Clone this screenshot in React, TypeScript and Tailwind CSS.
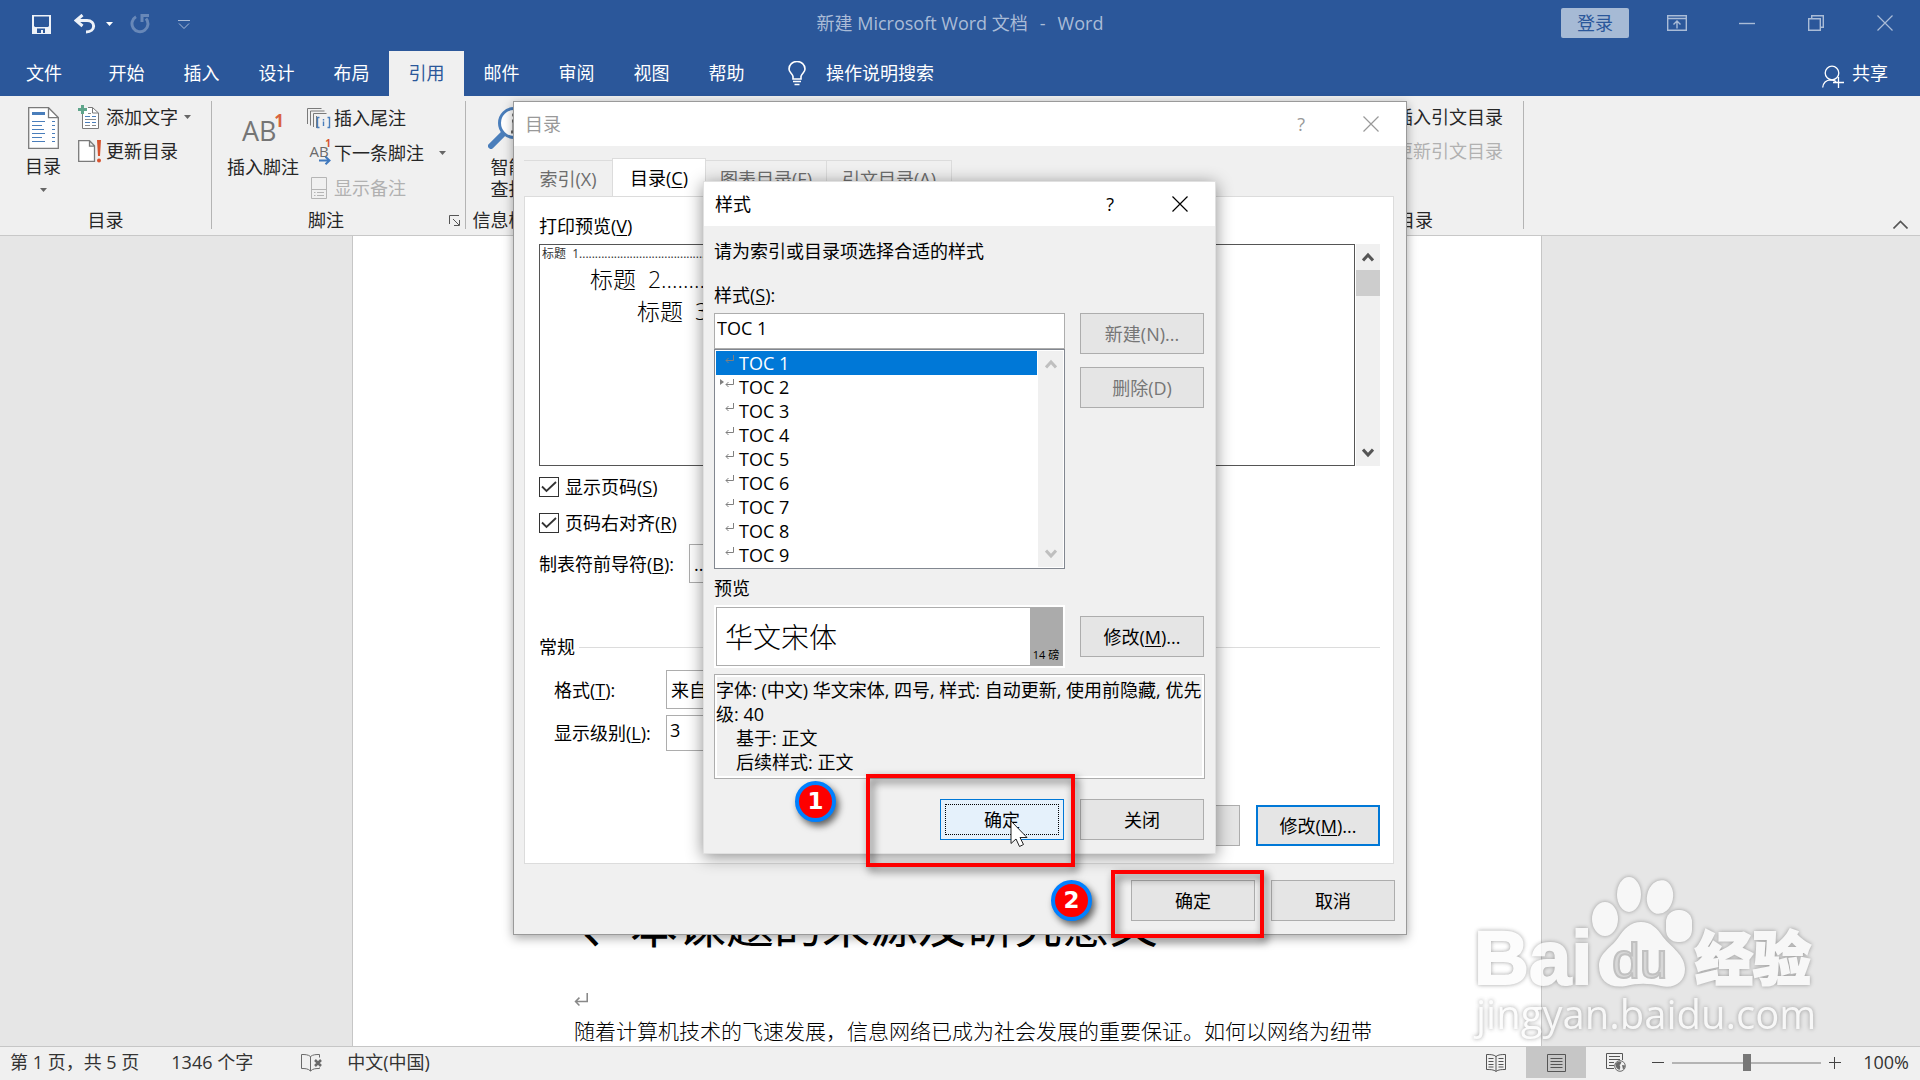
import { useState, type ReactNode } from "react";

const TABS = ["开始", "插入", "设计", "布局", "引用", "邮件", "审阅", "视图", "帮助"];
const STYLES = ["TOC 1", "TOC 2", "TOC 3", "TOC 4", "TOC 5", "TOC 6", "TOC 7", "TOC 8", "TOC 9"];

function Caret() {
  return (
    <svg width="7" height="4" viewBox="0 0 7 4" fill="currentColor" className="shrink-0">
      <path d="M0 0h7L3.5 4z" />
    </svg>
  );
}

function Chevron({ up, className }: { up?: boolean; className?: string }) {
  return (
    <svg width="12" height="10" viewBox="0 0 12 10" fill="none" stroke="currentColor" strokeWidth="3" className={className}>
      <path d={up ? "M1 8.5 6 3l5 5.5" : "M1 1.5 6 7l5-5.5"} />
    </svg>
  );
}

function CloseIcon({ size = 16 }: { size?: number }) {
  return (
    <svg width={size} height={size} viewBox="0 0 16 16" fill="none" stroke="currentColor" strokeWidth="1.2">
      <path d="M.5.5l15 15M15.5.5l-15 15" />
    </svg>
  );
}

// label text followed by its underlined access key, e.g. 目录(C)
function Key({ text, k, end = "", plain }: { text: string; k: string; end?: string; plain?: boolean }) {
  return (
    <span>
      {text}({plain ? k : <u className="underline-offset-2">{k}</u>}){end}
    </span>
  );
}

function ReturnMark({ className, size = 9 }: { className?: string; size?: number }) {
  return (
    <svg width={size} height={size} viewBox="0 0 9 9" fill="none" stroke="currentColor" className={className}>
      <path d="M8.5 0v5.5H1M3.5 3 1 5.5 3.5 8" />
    </svg>
  );
}

function PushButton({ children, disabled, primary }: { children: ReactNode; disabled?: boolean; primary?: boolean }) {
  return (
    <button
      disabled={disabled}
      className={
        "flex h-[41px] w-[124px] shrink-0 items-center justify-center bg-[#e5e5e5] " +
        (primary ? "border-2 border-[#0078d7] " : "border border-[#adadad] ") +
        (disabled ? "text-[#767676]" : "text-black")
      }
    >
      {children}
    </button>
  );
}

function TitleBar() {
  return (
    <div className="relative flex h-[51px] shrink-0 items-start text-white">
      <div className="flex h-12 items-center pl-8">
        <button aria-label="保存">
          <svg width="19" height="19" viewBox="0 0 19 19" fill="#eef2f8" fillRule="evenodd">
            <path d="M0 0h19v19H0zM2 1.5v9.5l1 1h13l1-1V1.500zM5 13.500v4.500h4v-3h2v3h2v-4.500z" />
          </svg>
        </button>
        <button aria-label="撤消" className="ml-[23px]">
          <svg width="22" height="20" viewBox="0 0 22 20" fill="none" stroke="#eef2f8" strokeWidth="3">
            <path d="M8.500 1 2 6.500 8.500 12M2.500 6.500H13c9 0 9 11.500-1 11.500" />
          </svg>
        </button>
        <button aria-label="撤消选项" className="ml-2.5"><Caret /></button>
        <button aria-label="重做" className="ml-[17px] text-[#6888b8]">
          <svg width="20" height="20" viewBox="0 0 20 20" fill="none" stroke="currentColor" strokeWidth="3">
            <path d="M6 2.800A8 8 0 1 0 16 4.500M12 8V1.500h7" />
          </svg>
        </button>
        <button aria-label="自定义快速访问工具栏" className="ml-7 text-[#aabcd7]">
          <svg width="12" height="9" viewBox="0 0 12 9" fill="none" stroke="currentColor">
            <path d="M0 .5h12M1 3.500l5 5 5-5" />
          </svg>
        </button>
      </div>
      <div className="absolute inset-x-0 top-[9px] flex justify-center gap-3 text-[18px] leading-7 text-[#aabcd7]">
        <span>新建 Microsoft Word 文档</span>
        <span>-</span>
        <span>Word</span>
      </div>
      <div className="relative ml-auto flex h-[46px] items-center pr-[27px] text-[#aabcd7]">
        <button className="h-[30px] w-[68px] rounded-xs bg-[#a6bad5] text-[18px] leading-7 text-[#2b579a]">登录</button>
        <button aria-label="功能区显示选项" className="ml-[38px]">
          <svg width="20" height="16" viewBox="0 0 20 16" fill="none" stroke="currentColor" strokeWidth="1.400">
            <path d="M.7.7h18.600v14.600H.7zM1 3.500h18M10 13.500V6.500M6.500 9.500 10 6l3.500 3.500" />
          </svg>
        </button>
        <button aria-label="最小化" className="ml-[52px]">
          <svg width="16" height="16" viewBox="0 0 16 16" fill="none" stroke="currentColor" strokeWidth="1.400"><path d="M0 8.500h16" /></svg>
        </button>
        <button aria-label="向下还原" className="ml-[53px]">
          <svg width="16" height="16" viewBox="0 0 16 16" fill="none" stroke="currentColor" strokeWidth="1.400">
            <path d="M.7 3.700h11.600v11.600H.7zM3.700 3.500V.7h11.600v11.600h-2.800" />
          </svg>
        </button>
        <button aria-label="关闭" className="ml-[53px]"><CloseIcon /></button>
      </div>
    </div>
  );
}

function TabBar({ active, onSelect }: { active: string; onSelect: (t: string) => void }) {
  return (
    <div className="flex h-[45px] shrink-0 items-stretch text-[18px] text-white">
      <button className="mr-px w-[88px]">文件</button>
      {TABS.map((t) => (
        <button
          key={t}
          onClick={() => onSelect(t)}
          className={t === active ? "w-[75px] bg-[#f0f0f0] text-[#2b579a]" : "w-[75px]"}
        >
          {t}
        </button>
      ))}
      <button className="ml-6 flex items-center gap-5">
        <svg width="18" height="25" viewBox="0 0 18 25" fill="none" stroke="currentColor" strokeWidth="1.600">
          <path d="M5 18v-2.500C4.500 12.500 1 11.500 1 8a8 7.500 0 0 1 16 0c0 3.500-3.500 4.500-4 7.500V18zM5 20.500h8M6.500 23.500h5" />
        </svg>
        操作说明搜索
      </button>
      <button className="mr-8 ml-auto flex items-center gap-2">
        <svg width="22" height="24" viewBox="0 0 22 24" fill="none" stroke="currentColor" strokeWidth="1.300" className="mt-1.5">
          <circle cx="10" cy="8" r="6.800" />
          <path d="M.7 22.500c.5-4.500 3.500-7.500 8-7.700 2.300 0 4 .7 5.500 1.700M16.500 12v11M11 17.500h11" />
        </svg>
        共享
      </button>
    </div>
  );
}

function TocIcon() {
  return (
    <svg width="31" height="42" viewBox="0 0 31 42" fill="none">
      <path d="M.7.7H20.500L30.300 10.500v30.800H.7z" fill="#fff" stroke="#7a7a7a" strokeWidth="1.300" />
      <path d="M20.500.7v10h9.800" stroke="#7a7a7a" strokeWidth="1.300" />
      <path d="M4 6.500h13" stroke="#4a7ebb" strokeWidth="3" />
      <path
        d="M4 14.500h13M4 18.500h10M4 22.500h12M4 26.500h13M4 30.500h10M4 34.500h13M24 14.500h3M24 18.500h3M24 22.500h3M24 26.500h3M24 30.500h3M24 34.500h3"
        stroke="#4a7ebb"
      />
    </svg>
  );
}

function AddTextIcon() {
  return (
    <svg width="22" height="24" viewBox="0 0 22 24" fill="none">
      <path d="M4.500 8v15.500h16V8l-6-5.500H10M14.500 2.500V8h6" fill="#fff" stroke="#7a7a7a" />
      <path d="M10 8.500h3M7 14.500h11M7 20.500h5M14 20.500h4" stroke="#8a8a8a" />
      <path d="M7 11.500h5M14 11.500h4M7 17.500h5M14 17.500h4" stroke="#4a7ebb" />
      <path d="M4.500 0v9M0 4.500h9" stroke="#5fa58b" strokeWidth="3" />
    </svg>
  );
}

function UpdateIcon() {
  return (
    <svg width="23" height="23" viewBox="0 0 23 23" fill="none">
      <path d="M.7.700h10.800l5 5v15.600H.7zM11.500.7v5.500h5" fill="#fff" stroke="#7a7a7a" strokeWidth="1.300" />
      <path d="M19 0h4l-1 16h-2z" fill="#d6532f" />
      <circle cx="21" cy="20.500" r="2" fill="#d6532f" />
    </svg>
  );
}

function EndnoteIcon() {
  return (
    <svg width="24" height="21" viewBox="0 0 24 21" fill="none">
      <path d="M.5 16V.5h14M3.500 17.500V3h14M6.500 19V5.500h13M9.500 20V8" stroke="#7a7a7a" />
      <path d="M12.500 9.500h-2v10h2M20.500 9.500h2v10h-2M16.500 11v1.500M16.500 13.500V18" stroke="#4a7ebb" strokeWidth="1.400" />
    </svg>
  );
}

function NextNoteIcon() {
  return (
    <span className="relative block h-6 w-6 text-[15px] leading-5 text-[#6a6a6a]">
      AB
      <span className="absolute -top-2 right-0 text-[10px] font-bold text-[#d6532f]">1</span>
      <svg width="12" height="9" viewBox="0 0 12 9" fill="none" stroke="#3f78bd" strokeWidth="2" className="absolute right-0 bottom-0">
        <path d="M0 4.500h10M6.500.7l4 3.800-4 3.800" />
      </svg>
    </span>
  );
}

function NotesIcon() {
  return (
    <svg width="24" height="22" viewBox="0 0 24 22" fill="none" stroke="#b5b5b5">
      <path d="M4.500.5h15v21h-15zM5 12.500h14M7 15.500h1.500M10 15.500h7M7 18.500h1.500M10 18.500h7" />
    </svg>
  );
}

function Ribbon() {
  return (
    <div className="relative flex h-[140px] shrink-0 border-b border-[#c8c8c8] bg-[#f0f0f0] pt-[5px] pb-1.5 text-[18px] leading-6 text-[#262626]">
      <div className="flex w-[212px] shrink-0 flex-col border-r border-[#b4b4b4]">
        <div className="flex flex-1">
          <button className="ml-[19px] flex w-[48px] flex-col items-center pt-1.5">
            <TocIcon />
            <span className="mt-[5px]">目录</span>
            <span className="mt-2.5 text-[#666]"><Caret /></span>
          </button>
          <div className="ml-[11px] flex flex-col items-start gap-0.5">
            <button className="flex h-8 items-center gap-1.5">
              <AddTextIcon />
              添加文字
              <span className="text-[#666]"><Caret /></span>
            </button>
            <button className="flex h-8 items-center gap-[5px]">
              <UpdateIcon />
              更新目录
            </button>
          </div>
        </div>
        <div className="text-center leading-[18px]">目录</div>
      </div>

      <div className="flex w-[254px] shrink-0 flex-col border-r border-[#b4b4b4]">
        <div className="flex flex-1">
          <button className="ml-[11px] flex w-20 flex-col items-center pt-2.5">
            <span className="relative h-11 w-[42px] text-left text-[27px] leading-10 text-[#757575]">
              AB
              <span className="absolute -top-2.5 right-0 text-[17px] font-bold text-[#d9623f]">1</span>
            </span>
            <span className="whitespace-nowrap">插入脚注</span>
          </button>
          <div className="ml-1 flex flex-col items-start gap-px">
            <button className="flex h-[34px] items-center gap-[3px]">
              <EndnoteIcon />
              插入尾注
            </button>
            <button className="flex h-[34px] items-center gap-[3px]">
              <NextNoteIcon />
              下一条脚注
              <span className="ml-3 text-[#666]"><Caret /></span>
            </button>
            <button disabled className="flex h-[34px] items-center gap-[3px] text-[#b1b1b1]">
              <NotesIcon />
              显示备注
            </button>
          </div>
        </div>
        <div className="flex items-center">
          <span className="ml-24 leading-[18px]">脚注</span>
          <button aria-label="脚注和尾注" className="mr-[5px] ml-auto">
            <svg width="11" height="11" viewBox="0 0 11 11" fill="none" stroke="#555">
              <path d="M.5 9V.5H10M4 4l6 6M10.500 5v5.500H5" />
            </svg>
          </button>
        </div>
      </div>

      <div className="flex w-[86px] shrink-0 flex-col border-r border-[#b4b4b4]">
        <button className="flex flex-1 flex-col items-center pt-1.5 leading-[22px]">
          <svg width="42" height="42" viewBox="0 0 42 42" fill="none">
            <path d="M3 39 16 26" stroke="#4a7ebb" strokeWidth="6" strokeLinecap="round" />
            <circle cx="26" cy="16" r="14.500" fill="#fff" stroke="#4a7ebb" strokeWidth="3" />
            <path d="M26 13v12M24 14h3M23 25h7" stroke="#666" strokeWidth="3" />
            <circle cx="26" cy="8" r="2" fill="#666" />
          </svg>
          <span className="mt-[7px]">智能</span>
          <span>查找</span>
        </button>
        <div className="text-center leading-[18px]">信息检索</div>
      </div>

      <div className="w-[287px] shrink-0 border-r border-[#b4b4b4]" />
      <div className="w-[229px] shrink-0 border-r border-[#b4b4b4]" />
      <div className="w-[203px] shrink-0 border-r border-[#b4b4b4]" />

      <div className="flex w-[253px] shrink-0 flex-col border-r border-[#b4b4b4]">
        <div className="flex flex-1 flex-col items-end gap-0.5 pr-5">
          <button className="h-8">插入引文目录</button>
          <button disabled className="h-8 text-[#b1b1b1]">更新引文目录</button>
        </div>
        <div className="text-center leading-[18px]">引文目录</div>
      </div>

      <button aria-label="折叠功能区" className="mr-3 ml-auto self-end">
        <svg width="15" height="9" viewBox="0 0 15 9" fill="none" stroke="#555" strokeWidth="1.600">
          <path d="M.5 8.500l7-7 7 7" />
        </svg>
      </button>
    </div>
  );
}

function Workspace() {
  return (
    <div className="flex min-h-0 flex-1 justify-center overflow-hidden bg-[#e6e6e6] pr-[26px]">
      <div className="flex w-[1190px] shrink-0 flex-col justify-end border-x border-[#c6c6c6] bg-white pl-[221px] text-black">
        <h1 className="pl-2 text-[48px] leading-[56px] whitespace-nowrap">、本课题的来源及研究意义</h1>
        <ReturnMark size={14} className="mt-10 text-[#888]" />
        <p className="mt-[9px] text-[21px] leading-[30px] font-light whitespace-nowrap">
          随着计算机技术的飞速发展，信息网络已成为社会发展的重要保证。如何以网络为纽带
        </p>
      </div>
    </div>
  );
}

function StatusBar() {
  return (
    <div className="flex h-[34px] shrink-0 items-stretch border-t border-[#c6c6c6] bg-[#f0f0f0] pb-0.5 text-[18px] text-[#333]">
      <div className="flex items-center pl-2.5">
        <span>第 1 页，共 5 页</span>
        <span className="ml-8">1346 个字</span>
        <svg width="22" height="18" viewBox="0 0 22 18" fill="none" stroke="#6a6a6a" className="ml-12">
          <path d="M9.500 2.500C7 .5 4 .5.5.500v14c3.500 0 6.500 0 9 2.500zM9.500 2.500C12 .5 15 .5 18.500.5v3M9.500 17c2.500-2.500 5.500-2.500 9-2.500v-1" />
          <path d="M14 6l6 6M20 6l-6 6" strokeWidth="2.500" />
        </svg>
        <span className="ml-6">中文(中国)</span>
      </div>
      <div className="ml-auto flex items-stretch pr-[11px]">
        <button aria-label="阅读视图" className="flex w-[60px] items-center justify-center">
          <svg width="20" height="18" viewBox="0 0 20 18" fill="none" stroke="#555">
            <path d="M10 2.500C8 .5 4 .5.500.5v15c3.500 0 7.500 0 9.500 2 2-2 6-2 9.500-2V.500C16 .5 12 .5 10 2.500zM10 2v15M2.500 4.500h5M2.500 7.500h5M2.500 10.500h5M2.500 13h5M12.500 4.500h5M12.500 7.500h5M12.500 10.500h5M12.500 13h5" />
          </svg>
        </button>
        <button aria-label="页面视图" className="flex w-[60px] items-center justify-center bg-[#c6c6c6]">
          <svg width="19" height="18" viewBox="0 0 19 18" fill="none" stroke="#555">
            <path d="M.5.5h18v17H.5zM3.500 4.500h12M3.500 7.500h12M3.500 10.500h12M3.500 13.500h12" />
          </svg>
        </button>
        <button aria-label="Web 版式视图" className="flex w-[60px] items-center justify-center">
          <svg width="20" height="19" viewBox="0 0 20 19" fill="none" stroke="#555">
            <path d="M8 15.500H.5V.5h16V7M3 3.500h11M3 6.500h11M3 9.500h5M3 12.500h5" />
            <circle cx="14" cy="13" r="5.300" fill="#f0f0f0" stroke="#6a6a6a" />
            <path d="M9.500 11c2-3 5-3 6-2-1 1 0 2-2 3 1 1 1 3 0 5-3-1-4-3-4-6zM16 12l3 .5c0 2-1 3-2 4z" fill="#6a6a6a" stroke="none" />
          </svg>
        </button>
        <div className="ml-1.5 flex items-center">
          <button aria-label="缩小">
            <svg width="12" height="12" viewBox="0 0 12 12" stroke="#444"><path d="M0 5.500h12" /></svg>
          </button>
          <input
            type="range"
            aria-label="显示比例"
            min={0}
            max={200}
            defaultValue={100}
            className="mx-2 h-4 w-[149px] appearance-none bg-transparent [&::-webkit-slider-runnable-track]:h-0.5 [&::-webkit-slider-runnable-track]:bg-[#b4b4b4] [&::-webkit-slider-thumb]:-mt-2 [&::-webkit-slider-thumb]:h-[17px] [&::-webkit-slider-thumb]:w-2 [&::-webkit-slider-thumb]:appearance-none [&::-webkit-slider-thumb]:bg-[#777]"
          />
          <button aria-label="放大">
            <svg width="12" height="12" viewBox="0 0 12 12" stroke="#444"><path d="M0 5.500h12M5.500 0v12" /></svg>
          </button>
          <button className="ml-[22px]">100%</button>
        </div>
      </div>
    </div>
  );
}

function CheckRow({ id, children }: { id: string; children: ReactNode }) {
  return (
    <div className="flex h-5 items-center">
      <span className="relative h-5 w-5">
        <input id={id} type="checkbox" defaultChecked className="peer block h-5 w-5 appearance-none border border-[#333] bg-white" />
        <svg width="16" height="12" viewBox="0 0 16 12" fill="none" stroke="#333" strokeWidth="1.800" className="pointer-events-none absolute top-1 left-0.5 hidden peer-checked:block">
          <path d="M1 5.500 5.500 10 15 1" />
        </svg>
      </span>
      <label htmlFor={id} className="ml-1.5">{children}</label>
    </div>
  );
}

function TocDialog() {
  return (
    <section
      aria-label="目录"
      className="absolute top-[101px] left-[513px] flex w-[894px] flex-col border border-[#9a9a9a] bg-[#f0f0f0] text-[18px] leading-6 text-black shadow-[0_3px_10px_rgba(0,0,0,0.35)]"
    >
      <header className="flex h-11 items-center bg-white pr-[27px] pl-[11px] text-[#999]">
        <h2>目录</h2>
        <button aria-label="帮助" className="mr-[58px] ml-auto">?</button>
        <button aria-label="关闭"><CloseIcon /></button>
      </header>

      <div className="flex items-end pt-3 pl-2.5 text-[#6d6d6d]">
        <button className="h-9 w-[88px] border-t border-[#dcdcdc]"><Key text="索引" k="X" plain /></button>
        <button className="-mb-px h-[39px] w-[94px] border border-b-0 border-[#dcdcdc] bg-white text-black"><Key text="目录" k="C" /></button>
        <button className="h-9 w-[121px] border-t border-r border-[#dcdcdc]"><Key text="图表目录" k="F" plain /></button>
        <button className="h-9 w-[125px] border-t border-r border-[#dcdcdc]"><Key text="引文目录" k="A" plain /></button>
      </div>

      <div className="mr-3 ml-2.5 border border-[#dcdcdc] bg-white pt-[17px] pr-[13px] pb-[17px] pl-3.5">
        <div><Key text="打印预览" k="V" /></div>
        <div className="mt-1.5 flex h-[222px]">
          <div className="flex-1 overflow-hidden border border-[#555] whitespace-pre">
            <div className="pl-0.5 text-[12px] leading-[18px] text-[#333]">标题  1{".".repeat(60)}</div>
            <div className="pl-[50px] text-[23px] leading-8 font-light">标题  2{".".repeat(20)}</div>
            <div className="pl-[97px] text-[23px] leading-[33px] font-light">标题  3{".".repeat(14)}</div>
          </div>
          <div className="ml-px flex w-6 flex-col items-center bg-[#f0f0f0] text-[#555]">
            <div className="flex h-[26px] items-center"><Chevron up /></div>
            <div className="h-[26px] w-full bg-[#cdcdcd]" />
            <div className="mt-auto flex h-[26px] items-center"><Chevron /></div>
          </div>
        </div>
        <div className="mt-[11px] flex flex-col gap-4">
          <CheckRow id="show-pages"><Key text="显示页码" k="S" /></CheckRow>
          <CheckRow id="align-right"><Key text="页码右对齐" k="R" /></CheckRow>
        </div>
        <div className="mt-[11px] flex items-center">
          <label htmlFor="leader" className="w-[150px]"><Key text="制表符前导符" k="B" end=":" /></label>
          <select id="leader" className="h-[39px] w-[180px] appearance-none border border-[#adadad] bg-white px-1">
            <option>......</option>
          </select>
        </div>
        <div className="mt-[52px] flex items-center gap-1">
          <h3>常规</h3>
          <div className="h-px flex-1 bg-[#dcdcdc]" />
        </div>
        <div className="mt-[11px] flex items-center pl-[15px]">
          <label htmlFor="format" className="w-28"><Key text="格式" k="T" end=":" /></label>
          <select id="format" className="h-[39px] w-[200px] appearance-none border border-[#adadad] bg-white px-1">
            <option>来自模板</option>
          </select>
        </div>
        <div className="mt-1.5 flex items-center pl-[15px]">
          <label htmlFor="levels" className="w-28"><Key text="显示级别" k="L" end=":" /></label>
          <input id="levels" defaultValue="3" className="h-9 w-[90px] border border-[#adadad] bg-white px-[3px] pb-1.5" />
        </div>
        <div className="mt-[54px] flex justify-end gap-4">
          <PushButton>{null}</PushButton>
          <PushButton primary><Key text="修改" k="M" end="..." /></PushButton>
        </div>
      </div>

      <footer className="flex justify-end gap-4 pt-4 pr-[11px] pb-[13px]">
        <PushButton>确定</PushButton>
        <PushButton>取消</PushButton>
      </footer>
    </section>
  );
}

function StyleDialog() {
  const [selected, setSelected] = useState("TOC 1");

  return (
    <section
      aria-label="样式"
      className="absolute top-[181px] left-[703px] w-[513px] border border-[#e0e0e0] bg-[#f0f0f0] text-[18px] leading-6 text-black shadow-[0_3px_16px_rgba(0,0,0,0.45)]"
    >
      <header className="flex h-11 items-center bg-white pr-[27px] pl-[11px]">
        <h2>样式</h2>
        <button aria-label="帮助" className="mr-[58px] ml-auto">?</button>
        <button aria-label="关闭"><CloseIcon /></button>
      </header>

      <div className="pt-[13px] pr-[11px] pb-[13px] pl-2.5">
        <p>请为索引或目录项选择合适的样式</p>
        <label htmlFor="style-name" className="mt-5 block"><Key text="样式" k="S" end=":" /></label>
        <div className="mt-1.5 flex gap-[15px]">
          <div className="flex-1">
            <input
              id="style-name"
              value={selected}
              onChange={(e) => setSelected(e.target.value)}
              className="block h-9 w-full border border-[#adadad] bg-white px-0.5 pb-1.5"
            />
            <div className="flex border border-[#828790] bg-white p-px">
              <ul role="listbox" aria-label="样式" className="flex-1">
                {STYLES.map((s) => (
                  <li
                    key={s}
                    role="option"
                    aria-selected={s === selected}
                    onClick={() => setSelected(s)}
                    className={s === selected ? "relative bg-[#0078d7] pl-[23px] text-white" : "relative pl-[23px]"}
                  >
                    <ReturnMark className="absolute top-1 left-[9px] text-[#808080]" />
                    {s === "TOC 2" && (
                      <svg width="4" height="6" viewBox="0 0 4 6" fill="#808080" className="absolute top-1 left-1"><path d="M0 0l4 3-4 3z" /></svg>
                    )}
                    {s}
                  </li>
                ))}
              </ul>
              <div className="ml-px flex w-[25px] flex-col items-center justify-between bg-[#f0f0f0] py-2 text-[#bfbfbf]">
                <Chevron up />
                <Chevron />
              </div>
            </div>
          </div>
          <div className="flex flex-col gap-[13px]">
            <PushButton disabled><Key text="新建" k="N" end="..." plain /></PushButton>
            <PushButton disabled><Key text="删除" k="D" plain /></PushButton>
          </div>
        </div>

        <div className="mt-[7px]">预览</div>
        <div className="mt-[5px] flex items-center gap-[15px]">
          <div className="flex-1 bg-white p-0.5">
            <div className="flex h-[59px] border border-[#adadad] text-[28px]">
              <span className="flex-1 self-center pl-2 font-light">华文宋体</span>
              <span className="flex w-8 items-end justify-center bg-[#ababab] text-[11px] leading-5 whitespace-nowrap">14 磅</span>
            </div>
          </div>
          <PushButton><Key text="修改" k="M" end="..." /></PushButton>
        </div>

        <div className="mt-1.5 -mr-px border border-[#adadad] px-px pt-[3px] pb-1 whitespace-nowrap shadow-[inset_0_0_0_2px_#fff]">
          <p>字体: (中文) 华文宋体, 四号, 样式: 自动更新, 使用前隐藏, 优先</p>
          <p>级: 40</p>
          <p className="pl-5">基于: 正文</p>
          <p className="pl-5">后续样式: 正文</p>
        </div>

        <div className="mt-5 flex justify-end gap-4">
          <button className="h-[41px] w-[124px] border border-[#0078d7] bg-[#e5f1fb] p-1">
            <span className="flex h-full items-center justify-center border border-dotted border-black">确定</span>
          </button>
          <PushButton>关闭</PushButton>
        </div>
      </div>
    </section>
  );
}

function Badge({ n, className }: { n: number; className: string }) {
  return (
    <div className={"absolute flex h-[41px] w-[41px] items-center justify-center rounded-full border-4 border-[#0080ff] bg-[#fe0000] font-['DejaVu_Sans',sans-serif] text-[23px] leading-none font-bold text-white shadow-[3px_4px_7px_rgba(0,0,0,0.6)] " + className}>
      {n}
    </div>
  );
}

function Watermark() {
  return (
    <svg width="350" height="170" viewBox="0 0 350 170" className="pointer-events-none absolute right-[100px] bottom-[34px] opacity-80 drop-shadow-[0_0_2px_rgba(110,110,110,0.8)]">
      <g fill="#fcfcfc">
        <text x="4" y="108" fontSize="76" fontWeight="700" fontFamily="Liberation Sans, sans-serif" stroke="#fcfcfc" strokeWidth="2">Bai</text>
        <ellipse cx="135" cy="43" rx="13" ry="17" />
        <ellipse cx="159" cy="18.500" rx="12" ry="17.500" />
        <ellipse cx="190" cy="21" rx="13" ry="17" transform="rotate(12 190 21)" />
        <rect x="196" y="34" width="26" height="32" rx="12" />
        <path d="M171 46c10 0 16 6 22 15 8 10 22 18 22 32 0 13-11 20-24 17-13-3-23-3-35 0-16 3-27-5-27-20 0-13 12-18 19-28 6-9 12-16 23-16z" />
        <text x="225" y="104" fontSize="58" fontWeight="900" fontFamily="Noto Sans CJK SC, sans-serif" stroke="#fcfcfc" strokeWidth="2">经验</text>
        <text x="6" y="153" fontSize="40" fontFamily="Open Sans, sans-serif">jingyan.baidu.com</text>
      </g>
      <text x="142" y="102" fontSize="50" fontFamily="Liberation Sans, sans-serif" fill="#d4d4d4" stroke="#b8b8b8" strokeWidth="2">du</text>
    </svg>
  );
}

export default function App() {
  const [tab, setTab] = useState("引用");

  return (
    <div className="relative flex h-screen flex-col overflow-hidden bg-[#2b579a] font-['Open_Sans','Noto_Sans_CJK_SC',sans-serif]">
      <TitleBar />
      <TabBar active={tab} onSelect={setTab} />
      <Ribbon />
      <Workspace />
      <StatusBar />
      <TocDialog />
      <StyleDialog />

      <div className="pointer-events-none absolute top-[774px] left-[866px] h-[93px] w-[209px] border-4 border-[#fe0000] drop-shadow-[3px_4px_4px_rgba(0,0,0,0.6)]" />
      <div className="pointer-events-none absolute top-[870px] left-[1111px] h-[68px] w-[153px] border-4 border-[#fe0000] drop-shadow-[3px_4px_4px_rgba(0,0,0,0.6)]" />
      <Badge n={1} className="top-[781px] left-[795px]" />
      <Badge n={2} className="top-[880px] left-[1051px]" />
      <svg width="18" height="27" viewBox="0 0 18 27" fill="#fff" stroke="#222" className="pointer-events-none absolute top-[820px] left-[1010px]">
        <path d="M1 1v22.500l5-4.500 3.500 7.500 4-2L10 17.500h7z" />
      </svg>
      <Watermark />
    </div>
  );
}
